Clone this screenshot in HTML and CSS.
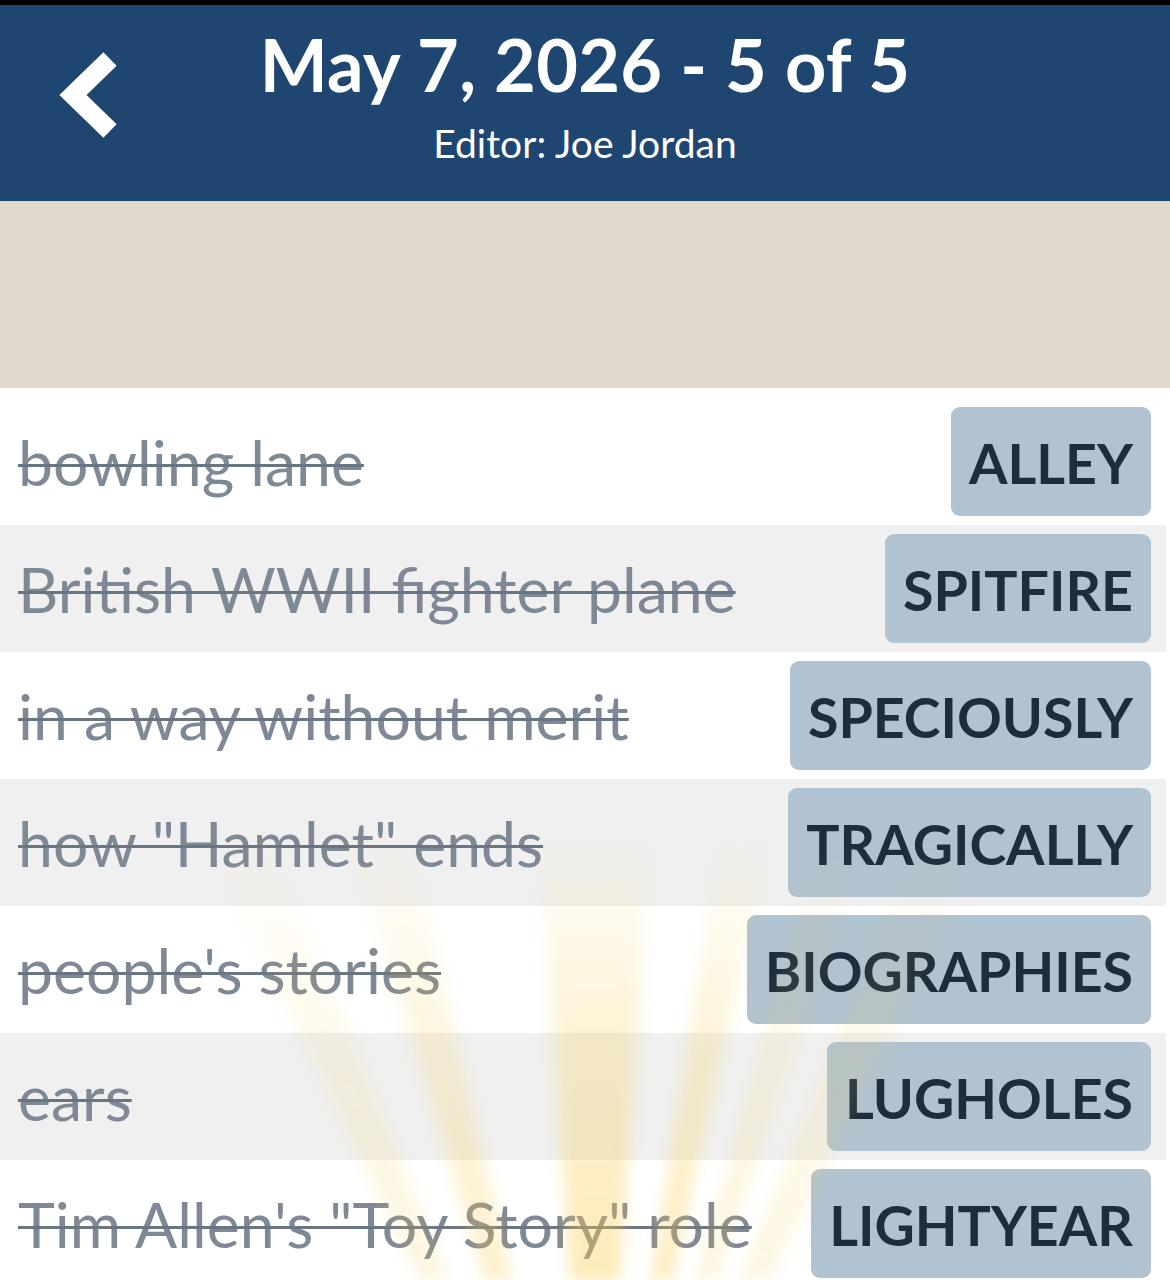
FILE: index.html
```html
<!DOCTYPE html>
<html lang="en">
<head>
<meta charset="utf-8">
<title>May 7, 2026 - 5 of 5</title>
<link rel="stylesheet" href="styles.css">
</head>
<body>
<div class="statusbar"></div>
<header class="topbar">
  <button class="back" aria-label="Back">
    <svg viewBox="0 0 80 110" width="80" height="110" aria-hidden="true">
      <polyline points="70,19 33,55 70,91" fill="none" stroke="#fff" stroke-width="19" stroke-linejoin="miter" stroke-linecap="butt"/>
    </svg>
  </button>
  <div class="titles">
    <h1 class="title">May 7, 2026 - 5 of 5</h1>
    <p class="editor">Editor: Joe Jordan</p>
  </div>
  <div class="spacer"></div>
</header>
<div class="banner"></div>
<main class="clues">
  <div class="row"><span class="clue">bowling lane</span><span class="answer">ALLEY</span></div>
  <div class="row"><span class="clue">British WWII fighter plane</span><span class="answer">SPITFIRE</span></div>
  <div class="row"><span class="clue">in a way without merit</span><span class="answer">SPECIOUSLY</span></div>
  <div class="row"><span class="clue">how "Hamlet" ends</span><span class="answer">TRAGICALLY</span></div>
  <div class="row"><span class="clue">people's stories</span><span class="answer">BIOGRAPHIES</span></div>
  <div class="row"><span class="clue">ears</span><span class="answer">LUGHOLES</span></div>
  <div class="row"><span class="clue">Tim Allen's "Toy Story" role</span><span class="answer">LIGHTYEAR</span></div>
  <div class="rays" aria-hidden="true"></div>
</main>
</body>
</html>
```
FILE: styles.css
```css
html, body {
  margin: 0;
  padding: 0;
}

body {
  width: 1170px;
  height: 1280px;
  overflow: hidden;
  background: #ffffff;
  font-family: "Lato", "Open Sans", sans-serif;
}

.statusbar {
  height: 5px;
  background: #000;
}

/* Blue title bar */
.topbar {
  height: 196px;
  background: #1f4670;
  display: grid;
  grid-template-columns: 1fr auto 1fr;
  align-items: start;
  color: #fff;
}

.back {
  justify-self: start;
  margin: 35px 0 0 40px;
  padding: 0;
  border: 0;
  background: none;
  width: 80px;
  height: 110px;
  display: block;
}

.back svg {
  display: block;
}

.titles {
  text-align: center;
  padding-top: 21px;
}

.title {
  margin: 0;
  font-size: 72px;
  line-height: 76px;
  font-weight: 700;
  letter-spacing: 0.3px;
}

.editor {
  margin: 18px 0 0;
  font-size: 39px;
  line-height: 46px;
  font-weight: 400;
}

/* Empty beige strip under the header */
.banner {
  height: 187px;
  background: #dfd8cc;
}

/* Clue list */
.clues {
  position: relative;
  padding-top: 10px;
  overflow: hidden;
  height: 882px;
}

.row {
  display: flex;
  align-items: center;
  justify-content: space-between;
  height: 127px;
  margin-right: 4px;
  padding: 0 15px 0 18px;
  box-sizing: border-box;
}

.row:nth-child(even) {
  background: #f0f0f0;
}

.clue {
  font-size: 62.5px;
  color: #7f8995;
  text-decoration: line-through;
  text-decoration-color: #6a7582;
  text-decoration-thickness: 3px;
  white-space: nowrap;
}

.answer {
  display: flex;
  align-items: center;
  height: 109px;
  padding: 2px 18px 0;
  box-sizing: border-box;
  background: #b1c3d0;
  border-radius: 9px;
  color: #1c2d3e;
  font-size: 55.5px;
  font-weight: 700;
  white-space: nowrap;
}

/* Soft sunburst glowing up from below the list */
.rays {
  position: absolute;
  inset: 0;
  pointer-events: none;
  background: conic-gradient(from -30deg at 595px 1252px,
    transparent 0deg,
    transparent 3deg,
    rgba(250, 205, 80, 0.18) 5deg,
    rgba(250, 205, 80, 0.18) 7deg,
    transparent 9deg,
    transparent 12deg,
    rgba(250, 205, 80, 0.30) 14deg,
    rgba(250, 205, 80, 0.30) 16deg,
    transparent 18deg,
    transparent 25deg,
    rgba(250, 205, 80, 0.40) 27deg,
    rgba(250, 205, 80, 0.40) 33deg,
    transparent 35deg,
    transparent 38deg,
    rgba(250, 205, 80, 0.34) 39.5deg,
    rgba(250, 205, 80, 0.34) 41.5deg,
    transparent 43deg,
    transparent 45deg,
    rgba(250, 205, 80, 0.18) 46deg,
    rgba(250, 205, 80, 0.18) 48deg,
    transparent 49.5deg,
    transparent 51deg,
    rgba(250, 205, 80, 0.16) 52.5deg,
    rgba(250, 205, 80, 0.16) 55deg,
    transparent 57deg,
    transparent 360deg);
  -webkit-mask-image: linear-gradient(to bottom, transparent 440px, rgba(0,0,0,0.6) 640px, #000 892px);
  mask-image: linear-gradient(to bottom, transparent 440px, rgba(0,0,0,0.6) 640px, #000 892px);
  filter: blur(6px);
}
```
